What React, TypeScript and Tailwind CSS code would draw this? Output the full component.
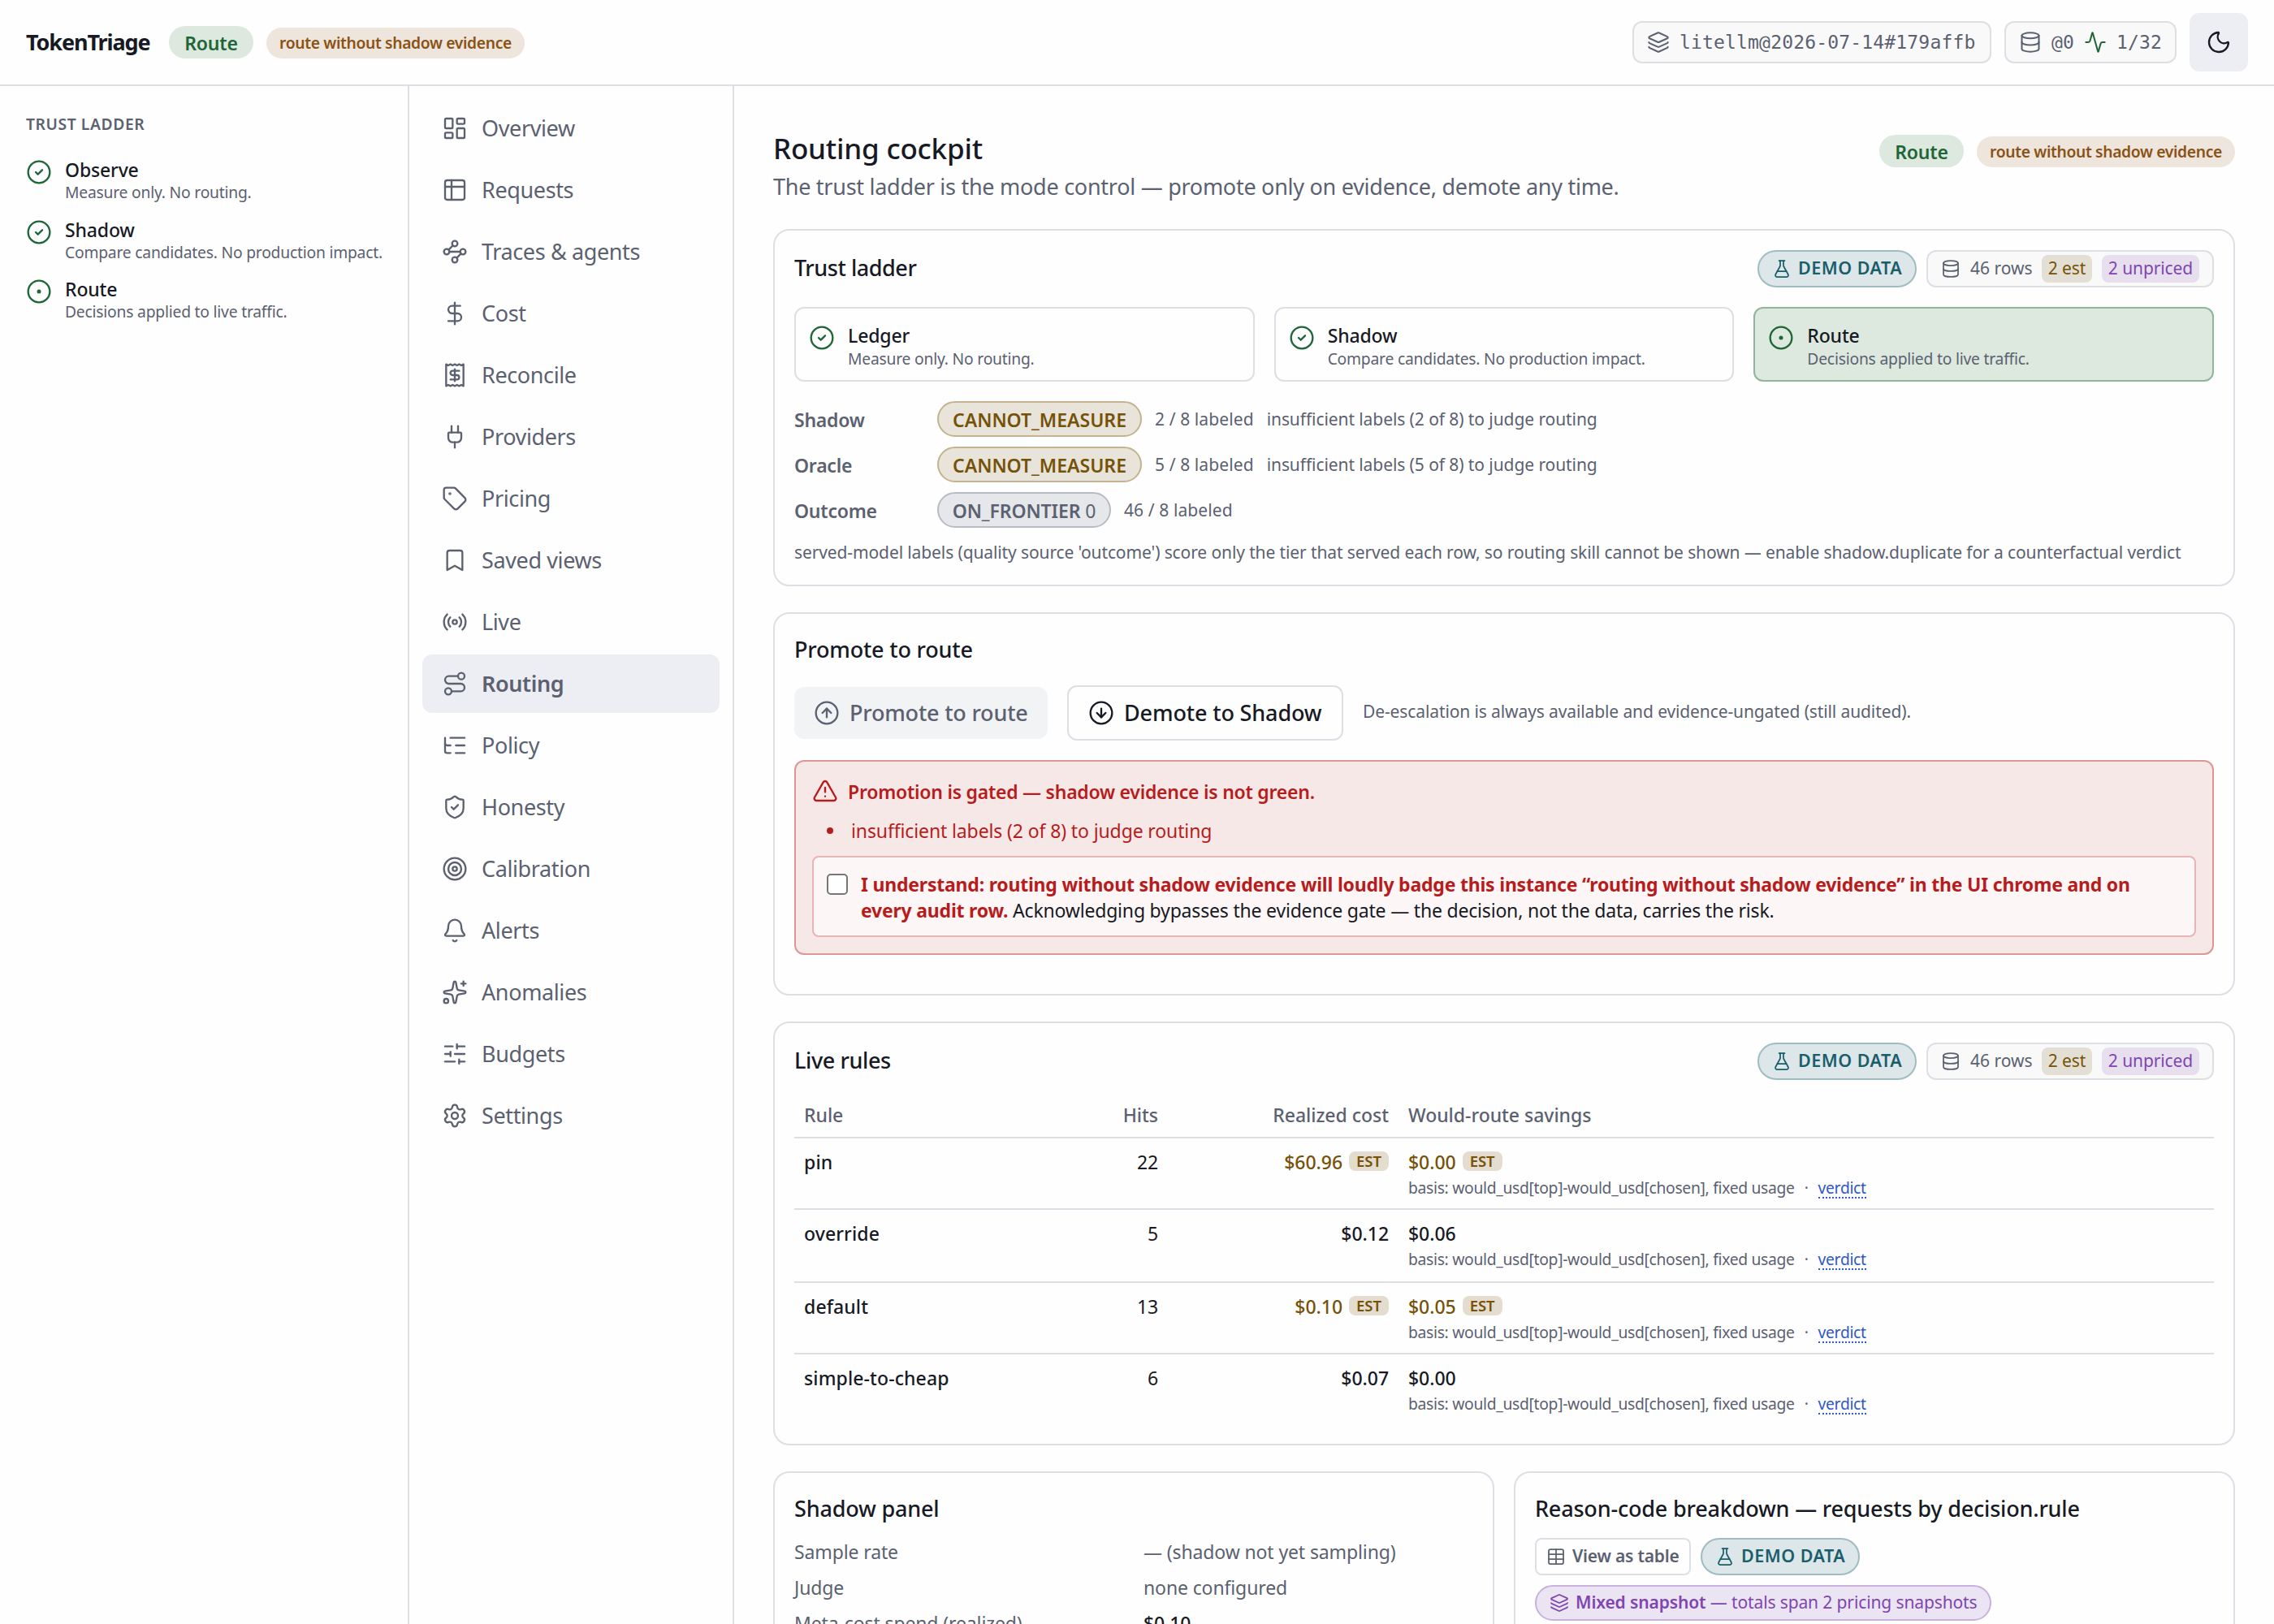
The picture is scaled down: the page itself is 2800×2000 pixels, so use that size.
import type { ReactNode } from "react";
import {
  Activity,
  Bell,
  Bookmark,
  CircleArrowDown,
  CircleArrowUp,
  CircleCheck,
  CircleDot,
  Database,
  DollarSign,
  FlaskConical,
  Layers,
  LayoutDashboard,
  ListTree,
  Moon,
  Plug,
  Radio,
  Receipt,
  Route,
  Settings,
  ShieldCheck,
  SlidersHorizontal,
  Sparkles,
  Table,
  Tag,
  Target,
  TriangleAlert,
  Waypoints,
} from "lucide-react";

// Table glyph with one header row and one header column
function RequestsIcon({ className }: { className?: string; strokeWidth?: number }) {
  return (
    <svg
      viewBox="0 0 24 24"
      fill="none"
      stroke="currentColor"
      strokeWidth={1.75}
      strokeLinecap="round"
      strokeLinejoin="round"
      className={className}
    >
      <rect x="3" y="3" width="18" height="18" rx="2" />
      <path d="M3 9h18" />
      <path d="M9 3v18" />
    </svg>
  );
}

const navItems = [
  { label: "Overview", icon: LayoutDashboard },
  { label: "Requests", icon: RequestsIcon },
  { label: "Traces & agents", icon: Waypoints },
  { label: "Cost", icon: DollarSign },
  { label: "Reconcile", icon: Receipt },
  { label: "Providers", icon: Plug },
  { label: "Pricing", icon: Tag },
  { label: "Saved views", icon: Bookmark },
  { label: "Live", icon: Radio },
  { label: "Routing", icon: Route, active: true },
  { label: "Policy", icon: ListTree },
  { label: "Honesty", icon: ShieldCheck },
  { label: "Calibration", icon: Target },
  { label: "Alerts", icon: Bell },
  { label: "Anomalies", icon: Sparkles },
  { label: "Budgets", icon: SlidersHorizontal },
  { label: "Settings", icon: Settings },
];

const steps = [
  { side: "Observe", name: "Ledger", desc: "Measure only. No routing.", current: false },
  { side: "Shadow", name: "Shadow", desc: "Compare candidates. No production impact.", current: false },
  { side: "Route", name: "Route", desc: "Decisions applied to live traffic.", current: true },
];

const rules = [
  { rule: "pin", hits: 22, cost: "$60.96", costEst: true, savings: "$0.00", savingsEst: true },
  { rule: "override", hits: 5, cost: "$0.12", costEst: false, savings: "$0.06", savingsEst: false },
  { rule: "default", hits: 13, cost: "$0.10", costEst: true, savings: "$0.05", savingsEst: true },
  { rule: "simple-to-cheap", hits: 6, cost: "$0.07", costEst: false, savings: "$0.00", savingsEst: false },
];

function Card({ children, className = "" }: { children: ReactNode; className?: string }) {
  return (
    <section className={`shrink-0 rounded-[20px] border-2 border-[#dcdfe4] p-6 ${className}`}>
      {children}
    </section>
  );
}

function CardTitle({ children }: { children: ReactNode }) {
  return (
    <h2 className="h-10 text-[27px] leading-[39px] font-medium tracking-[-0.19px] whitespace-nowrap">
      {children}
    </h2>
  );
}

function ModePills() {
  return (
    <div className="flex items-end gap-4">
      <span className="h-10 w-[104px] rounded-full bg-[#dde8df] pt-0.5 text-center text-[23px] leading-[38px] font-semibold tracking-[-0.2px] text-[#1e6637]">
        Route
      </span>
      <span className="h-[38px] w-[318px] rounded-full bg-[#eee5dc] text-center text-[19.25px] leading-[38px] font-semibold tracking-[-0.34px] whitespace-nowrap text-[#8b5216]">
        route without shadow evidence
      </span>
    </div>
  );
}

function StepIcon({ current }: { current: boolean }) {
  const Icon = current ? CircleDot : CircleCheck;
  return <Icon strokeWidth={1.75} className="size-8 shrink-0 text-[#1e6637]" />;
}

function DemoPill() {
  return (
    <span className="flex h-[46px] w-[196px] items-center gap-2 rounded-full border-2 border-[#9fbcc3] bg-[#dde7e9] pl-4 text-[#1b5e6b]">
      <FlaskConical strokeWidth={1.75} className="size-6 shrink-0" />
      <span className="pb-0.5 text-[21.5px] leading-8 font-semibold tracking-[0.5px] whitespace-nowrap">
        DEMO DATA
      </span>
    </span>
  );
}

function DataChips() {
  return (
    <div className="flex gap-3">
      <DemoPill />
      <span className="flex h-[46px] w-[354px] items-center gap-3 rounded-xl border-2 border-[#dcdfe4] bg-[#f9f9fa] pl-4 text-[21px] text-[#5b6170]">
        <Database strokeWidth={1.75} className="size-6 shrink-0" />
        <span className="w-[76px] pb-0.5 leading-8 whitespace-nowrap">46 rows</span>
        <span className="h-[34px] w-[62px] rounded-lg bg-[#e4dfd4] text-center leading-[32px] tracking-[-0.1px] text-[#755208]">
          2 est
        </span>
        <span className="h-[34px] w-[120px] rounded-lg bg-[#e7dfee] text-center leading-[32px] tracking-[-0.1px] whitespace-nowrap text-[#7f46b0]">
          2 unpriced
        </span>
      </span>
    </div>
  );
}

function Verdict({
  label,
  verdict,
  value,
  counts,
  note,
}: {
  label: string;
  verdict: string;
  value?: string;
  counts: string;
  note?: string;
}) {
  return (
    <div className="flex h-11 items-center gap-4 text-[21px] whitespace-nowrap text-[#5b6170]">
      <span className="w-40 pt-0.5 text-[23px] font-semibold tracking-[-0.24px]">{label}</span>
      {value ? (
        <span className="h-11 w-[214px] rounded-full border-2 border-[#b8bbc2] bg-[#e5e7ea] pt-px text-center text-[23px] leading-10 font-semibold tracking-[-0.1px]">
          {verdict} <span className="font-normal">{value}</span>
        </span>
      ) : (
        <span className="h-11 w-[252px] rounded-full border-2 border-[#c4b28e] bg-[#e8e4da] pt-px text-center text-[23px] leading-10 font-semibold text-[#755208]">
          {verdict}
        </span>
      )}
      <span className="pt-px tracking-[0.1px]">{counts}</span>
      {note && <span className="pt-px tracking-[-0.08px]">{note}</span>}
    </div>
  );
}

function Money({ amount, est }: { amount: string; est: boolean }) {
  return (
    <span
      className={`flex h-9 items-center gap-2 font-medium tracking-[-0.05px] ${est ? "text-[#755208]" : "text-[#171a24]"}`}
    >
      {amount}
      {est && (
        <span className="mb-0.5 h-6 w-[49px] rounded-lg bg-[#e4dccf] text-center text-[18.5px] leading-6 font-semibold tracking-normal">
          EST
        </span>
      )}
    </span>
  );
}

function Header() {
  return (
    <header className="flex h-[106px] items-center justify-between border-b-2 border-[#dcdfe4] px-8">
      <div className="flex items-center">
        <span className="w-44 text-[27px] font-bold tracking-[-1.1px]">TokenTriage</span>
        <ModePills />
      </div>
      <div className="flex items-center gap-4 font-['DejaVu_Sans_Mono',monospace] text-[23px] tracking-[0.17px] text-[#5b6170]">
        <span className="flex h-[52px] w-[442px] items-center gap-3 rounded-xl border-2 border-[#dcdfe4] bg-[#f9f9fa] pl-4">
          <Layers strokeWidth={1.75} className="size-7 shrink-0" />
          litellm@2026-07-14#179affb
        </span>
        <span className="flex h-[52px] w-[212px] items-center gap-3 rounded-xl border-2 border-[#dcdfe4] bg-[#f9f9fa] pl-4">
          <Database strokeWidth={1.75} className="size-7 shrink-0" />
          @0
          <Activity strokeWidth={1.75} className="size-7 shrink-0 text-[#1e6637]" />
          1/32
        </span>
        <button className="flex size-[72px] items-center justify-center rounded-xl bg-[#edeef3] text-[#171a24]">
          <Moon strokeWidth={1.75} className="size-8" />
        </button>
      </div>
    </header>
  );
}

function TrustSidebar() {
  return (
    <aside className="w-[504px] border-r-2 border-[#dcdfe4] px-8 pt-8">
      <h3 className="mb-[27px] text-[19.25px] leading-[29px] font-semibold tracking-[0.6px] text-[#5b6170]">
        TRUST LADDER
      </h3>
      <ol className="flex flex-col gap-[17px]">
        {steps.map((step) => (
          <li key={step.side} className="flex h-14 gap-4 first:mb-px">
            <span className="pt-0.5">
              <StepIcon current={step.current} />
            </span>
            <div className="whitespace-nowrap">
              <p className="text-[23px] leading-[30px] font-medium tracking-[-0.15px]">{step.side}</p>
              <p className="text-[19.25px] leading-[26px] tracking-[-0.2px] text-[#5b6170]">{step.desc}</p>
            </div>
          </li>
        ))}
      </ol>
    </aside>
  );
}

function Nav() {
  return (
    <nav className="flex w-[400px] flex-col gap-1 border-r-2 border-[#dcdfe4] p-4">
      {navItems.map(({ label, icon: Icon, active }) => (
        <a
          key={label}
          className={`flex h-[72px] items-center gap-4 rounded-xl px-6 text-[27px] tracking-[-0.38px] text-[#5b6170] ${
            active ? "bg-[#edeef3] font-semibold" : ""
          }`}
        >
          <Icon strokeWidth={1.75} className="size-8 shrink-0" />
          <span className="pt-px pl-px">{label}</span>
        </a>
      ))}
    </nav>
  );
}

function TrustCard() {
  return (
    <Card className="h-[440px]">
      <div className="flex h-[46px] items-start justify-between">
        <h2 className="text-[27px] leading-[43px] font-medium tracking-[-0.45px]">Trust ladder</h2>
        <DataChips />
      </div>
      <div className="mt-6 grid grid-cols-3 gap-6">
        {steps.map((step) => (
          <div
            key={step.name}
            className={`flex h-[92px] gap-4 rounded-xl border-2 px-4 pt-[17px] ${
              step.current ? "border-[#8fb59b] bg-[#dde8df]" : "border-[#dcdfe4]"
            }`}
          >
            <span className="pt-[3px]">
              <StepIcon current={step.current} />
            </span>
            <div className="whitespace-nowrap">
              <p className="text-[23px] leading-8 font-medium tracking-[-0.15px]">{step.name}</p>
              <p className="text-[19.25px] leading-[25px] tracking-[-0.2px] text-[#5b6170]">{step.desc}</p>
            </div>
          </div>
        ))}
      </div>
      <div className="mt-6 flex flex-col gap-3">
        <Verdict
          label="Shadow"
          verdict="CANNOT_MEASURE"
          counts="2 / 8 labeled"
          note="insufficient labels (2 of 8) to judge routing"
        />
        <Verdict
          label="Oracle"
          verdict="CANNOT_MEASURE"
          counts="5 / 8 labeled"
          note="insufficient labels (5 of 8) to judge routing"
        />
        <Verdict label="Outcome" verdict="ON_FRONTIER" value="0" counts="46 / 8 labeled" />
      </div>
      <p className="mt-[13px] text-[21px] leading-[34px] tracking-[-0.11px] whitespace-nowrap text-[#5b6170]">
        served-model labels (quality source 'outcome') score only the tier that served each row, so routing
        skill cannot be shown — enable shadow.duplicate for a counterfactual verdict
      </p>
    </Card>
  );
}

function PromoteCard() {
  return (
    <Card className="h-[472px]">
      <CardTitle>Promote to route</CardTitle>
      <div className="mt-6 flex h-[68px] items-center gap-6 whitespace-nowrap">
        <button className="flex h-16 w-[312px] items-center gap-3 rounded-xl bg-[#f2f3f5] pl-6 text-[27px] font-medium tracking-[-0.2px] text-[#5b6170]">
          <CircleArrowUp strokeWidth={1.75} className="size-8 shrink-0" />
          Promote to route
        </button>
        <button className="flex h-[68px] w-[340px] items-center gap-3 rounded-xl border-2 border-[#dcdfe4] pl-6 text-[27px] font-medium tracking-[-0.14px]">
          <CircleArrowDown strokeWidth={1.75} className="size-8 shrink-0" />
          Demote to Shadow
        </button>
        <span className="pb-0.5 text-[21px] tracking-[-0.11px] text-[#5b6170]">
          De-escalation is always available and evidence-ungated (still audited).
        </span>
      </div>
      <div className="mt-6 rounded-xl border-2 border-[#dd9696] bg-[#f6e8e7] p-5 text-[23px] text-[#b71c1c]">
        <div className="flex h-8 items-center gap-3">
          <TriangleAlert strokeWidth={1.75} className="size-8 shrink-0" />
          <p className="pt-0.5 leading-8 font-semibold tracking-[-0.24px]">
            Promotion is gated — shadow evidence is not green.
          </p>
        </div>
        <ul className="mt-[15px] mb-[13px] pl-[18px]">
          <li className="flex items-center gap-[22px] leading-9 tracking-[-0.12px]">
            <span className="size-2 rounded-full bg-[#b71c1c]" />
            insufficient labels (2 of 8) to judge routing
          </li>
        </ul>
        <label className="flex h-[100px] gap-4 rounded-lg border-2 border-[#e6b5b5] bg-[#fdf6f6] px-4 pt-[17px]">
          <span className="mt-[3px] size-[26px] shrink-0 rounded-[5px] border-2 border-[#767676] bg-white" />
          <span className="leading-8 tracking-[-0.19px] whitespace-nowrap">
            <strong className="font-bold tracking-[-0.21px]">
              I understand: routing without shadow evidence will loudly badge this instance “routing without
              shadow evidence” in the UI chrome and on
              <br />
              every audit row.
            </strong>{" "}
            <span className="text-[#171a24]">
              Acknowledging bypasses the evidence gate — the decision, not the data, carries the risk.
            </span>
          </span>
        </label>
      </div>
    </Card>
  );
}

function RulesCard() {
  return (
    <Card className="h-[522px]">
      <div className="flex h-[46px] items-start justify-between">
        <h2 className="text-[27px] leading-[43px] font-medium tracking-[-0.4px]">Live rules</h2>
        <DataChips />
      </div>
      <div className="mt-6 text-[23px] leading-9 tracking-[-0.2px]">
        <div className="grid h-12 grid-cols-[230px_230px_284px_1fr] border-b-2 border-[#dcdfe4] pt-px font-medium tracking-[-0.02px] text-[#5b6170]">
          <span className="px-3">Rule</span>
          <span className="px-3 text-right">Hits</span>
          <span className="px-3 text-right">Realized cost</span>
          <span className="px-3">Would-route savings</span>
        </div>
        {rules.map((row) => (
          <div
            key={row.rule}
            className="grid h-[88px] grid-cols-[230px_230px_284px_1fr] border-b-2 border-[#dcdfe4] pt-[11px] last:border-0 odd:h-[90px]"
          >
            <span className="px-3 font-medium tracking-[0.12px]">{row.rule}</span>
            <span className="px-3 text-right">{row.hits}</span>
            <span className="flex justify-end px-3">
              <Money amount={row.cost} est={row.costEst} />
            </span>
            <div className="px-3">
              <Money amount={row.savings} est={row.savingsEst} />
              <p className="flex gap-3 text-[19.25px] leading-[27px] tracking-[-0.29px] text-[#5b6170]">
                <span>basis: would_usd[top]-would_usd[chosen], fixed usage</span>
                <span>·</span>
                <a className="h-[27px] border-b-2 border-dotted border-[#2f58c8] text-[#2f58c8]">verdict</a>
              </p>
            </div>
          </div>
        ))}
      </div>
    </Card>
  );
}

function ShadowPanel() {
  return (
    <Card className="h-[420px]">
      <CardTitle>Shadow panel</CardTitle>
      <dl className="mt-[15px] grid grid-cols-2 gap-x-6 gap-y-2 text-[23px] leading-9 tracking-[-0.12px] text-[#5b6170]">
        <dt>Sample rate</dt>
        <dd>— (shadow not yet sampling)</dd>
        <dt>Judge</dt>
        <dd>none configured</dd>
        <dt>Meta-cost spend (realized)</dt>
        <dd className="font-medium text-[#171a24]">$0.10</dd>
      </dl>
    </Card>
  );
}

function ReasonPanel() {
  return (
    <Card className="h-[420px]">
      <CardTitle>Reason-code breakdown — requests by decision.rule</CardTitle>
      <div className="mt-4 flex gap-3">
        <button className="flex h-[46px] w-[192px] items-center gap-2 rounded-lg border-2 border-[#dcdfe4] pl-3 text-[#5b6170]">
          <Table strokeWidth={1.75} className="size-6 shrink-0" />
          <span className="pb-0.5 text-[21px] leading-8 font-semibold tracking-[-0.2px] whitespace-nowrap">
            View as table
          </span>
        </button>
        <DemoPill />
      </div>
      <div className="mt-3 flex h-11 w-[562px] items-center gap-2 rounded-full border-2 border-[#c9b1de] bg-[#ebe4f2] pl-4 text-[21px] tracking-[-0.12px] whitespace-nowrap text-[#7f46b0]">
        <Layers strokeWidth={1.75} className="size-6 shrink-0" />
        <span>
          <span className="font-semibold">Mixed snapshot</span> — totals span 2 pricing snapshots
        </span>
      </div>
    </Card>
  );
}

export default function App() {
  return (
    <div className="flex h-[2000px] w-[2800px] flex-col overflow-hidden bg-[#fefefe] font-['Noto_Sans',sans-serif] text-[#171a24]">
      <Header />
      <div className="flex min-h-0 flex-1">
        <TrustSidebar />
        <Nav />
        <main className="flex flex-1 flex-col gap-8 overflow-hidden px-12 pt-[52px]">
          <div className="flex items-start justify-between">
            <div>
              <h1 className="pt-px text-[35px] leading-[48px] font-medium tracking-[-0.2px]">Routing cockpit</h1>
              <p className="mt-[3px] text-[27px] leading-10 tracking-[-0.27px] text-[#5b6170]">
                The trust ladder is the mode control — promote only on evidence, demote any time.
              </p>
            </div>
            <div className="pt-2">
              <ModePills />
            </div>
          </div>
          <TrustCard />
          <PromoteCard />
          <RulesCard />
          <div className="grid shrink-0 grid-cols-2 gap-6">
            <ShadowPanel />
            <ReasonPanel />
          </div>
        </main>
      </div>
    </div>
  );
}
